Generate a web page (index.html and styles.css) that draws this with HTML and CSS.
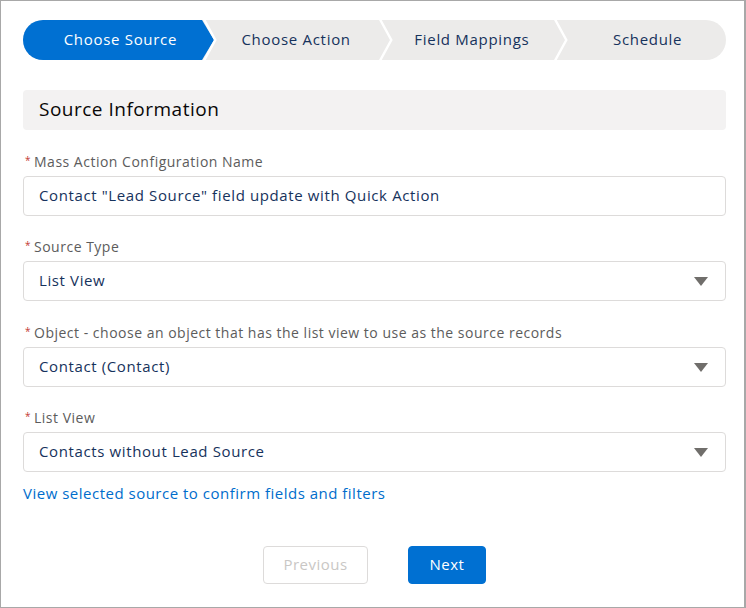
FILE: index.html
```html
<!DOCTYPE html>
<html>
<head>
<meta charset="utf-8">
<link rel="stylesheet" href="styles.css">
</head>
<body>
<div class="frame">
  <div class="path">
    <div class="step active">Choose Source
      <svg class="sep" width="20" height="40" viewBox="0 0 20 40"><polygon points="0,0 3,0 15,20 3,40 0,40" fill="#0070d2"/><polyline points="4.3,-2 16.3,20 4.3,42" fill="none" stroke="#fff" stroke-width="2.4"/></svg>
    </div>
    <div class="step">Choose Action
      <svg class="sep" width="20" height="40" viewBox="0 0 20 40"><polyline points="4.3,-2 16.3,20 4.3,42" fill="none" stroke="#fff" stroke-width="2.4"/></svg>
    </div>
    <div class="step">Field Mappings
      <svg class="sep" width="20" height="40" viewBox="0 0 20 40"><polyline points="4.3,-2 16.3,20 4.3,42" fill="none" stroke="#fff" stroke-width="2.4"/></svg>
    </div>
    <div class="step">Schedule</div>
  </div>

  <div class="section-title">Source Information</div>

  <div class="field">
    <label class="label"><abbr class="req">*</abbr>Mass Action Configuration Name</label>
    <div class="input">Contact "Lead Source" field update with Quick Action</div>
  </div>

  <div class="field">
    <label class="label"><abbr class="req">*</abbr>Source Type</label>
    <div class="input select">List View
      <svg class="caret" width="14" height="9" viewBox="0 0 14 9"><polygon points="0,0 14,0 7,9" fill="#706e6b"/></svg>
    </div>
  </div>

  <div class="field">
    <label class="label"><abbr class="req">*</abbr>Object - choose an object that has the list view to use as the source records</label>
    <div class="input select">Contact (Contact)
      <svg class="caret" width="14" height="9" viewBox="0 0 14 9"><polygon points="0,0 14,0 7,9" fill="#706e6b"/></svg>
    </div>
  </div>

  <div class="field">
    <label class="label"><abbr class="req">*</abbr>List View</label>
    <div class="input select">Contacts without Lead Source
      <svg class="caret" width="14" height="9" viewBox="0 0 14 9"><polygon points="0,0 14,0 7,9" fill="#706e6b"/></svg>
    </div>
  </div>

  <a class="link" href="#">View selected source to confirm fields and filters</a>

  <div class="buttons">
    <button class="btn prev">Previous</button>
    <button class="btn next">Next</button>
  </div>
</div>
</body>
</html>
```

FILE: styles.css
```css
html, body {
  margin: 0;
  padding: 0;
  background: #fff;
}
.frame {
  box-sizing: border-box;
  width: 746px;
  height: 608px;
  border: 1px solid #a8a8a8;
  border-right-width: 2px;
  padding: 19px 18px 0 22px;
  font-family: "Open Sans", Lato, sans-serif;
  letter-spacing: 0.5px;
  color: #16325c;
  display: flex;
  flex-direction: column;
}
.path {
  display: flex;
  height: 40px;
  border-radius: 20px;
  background: #ecebea;
  overflow: hidden;
  position: relative;
}
.step {
  flex: none;
  width: 25%;
  box-sizing: border-box;
  position: relative;
  display: flex;
  align-items: center;
  justify-content: center;
  font-size: 15px;
  letter-spacing: 0.7px;
  color: #16325c;
  padding-left: 19px;
  padding-bottom: 2px;
}
.step.active {
  background: #0070d2;
  color: #fff;
}
.sep {
  position: absolute;
  right: -20px;
  top: 0;
  z-index: 2;
}
.section-title {
  margin-top: 30px;
  height: 40px;
  background: #f3f2f2;
  border-radius: 4px;
  display: flex;
  align-items: center;
  padding-left: 16px;
  padding-bottom: 2px;
  box-sizing: border-box;
  font-size: 19px;
  color: #080707;
}
.field {
  margin-top: 22.5px;
  display: flex;
  flex-direction: column;
}
.label {
  font-size: 14px;
  line-height: 18px;
  height: 18px;
  color: #5c5c5c;
  margin-bottom: 5px;
  padding-left: 2px;
}
.req {
  color: #c23934;
  text-decoration: none;
  border: 0;
  font-size: 10px;
  line-height: 0;
  margin-right: 3px;
  vertical-align: 3px;
}
.input {
  position: relative;
  box-sizing: border-box;
  height: 40px;
  border: 1px solid #dddbda;
  border-radius: 4px;
  display: flex;
  align-items: center;
  padding-left: 15px;
  padding-bottom: 2px;
  font-size: 15px;
  letter-spacing: 0.62px;
  color: #16325c;
  background: #fff;
}
.caret {
  position: absolute;
  right: 17px;
  top: 15px;
}
.link {
  margin-top: 11px;
  font-size: 15px;
  color: #006dcc;
  text-decoration: none;
}
.buttons {
  margin-top: 43px;
  display: flex;
  justify-content: center;
  gap: 40px;
}
.btn {
  box-sizing: border-box;
  height: 38px;
  border-radius: 4px;
  font-family: "Open Sans", Lato, sans-serif;
  letter-spacing: 0.5px;
  font-size: 15px;
  padding: 0 0 2px;
}
.prev {
  width: 105px;
  background: #fff;
  border: 1px solid #dddbda;
  color: #c9c7c5;
}
.next {
  width: 78px;
  background: #0070d2;
  border: 1px solid #0070d2;
  color: #fff;
}
```
